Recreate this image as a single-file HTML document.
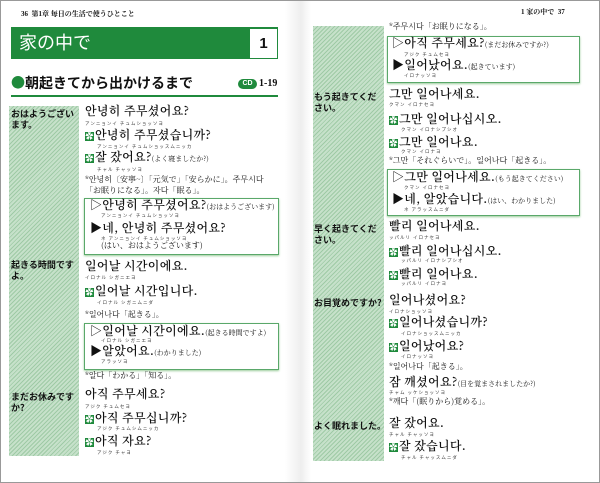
<!DOCTYPE html>
<html><head><meta charset="utf-8"><style>
body{margin:0;width:600px;height:483px;overflow:hidden;background:#fff;font-family:"Liberation Serif","Noto Serif CJK SC",serif;color:#111}
#f{position:absolute;left:0;top:0;width:598px;height:481px;border:1px solid #999;background:#fff}
.a{position:absolute;white-space:nowrap;line-height:1}
.k{font-size:12px;font-family:"Noto Serif CJK SC","Noto Sans CJK KR",serif;font-weight:600;letter-spacing:.3px;margin-top:-2px}
.k small{font-size:7px;font-family:"Noto Serif CJK SC",serif;font-weight:400;letter-spacing:0}
.r{font-size:4.5px;color:#333;letter-spacing:1px;font-family:"Noto Sans CJK JP",sans-serif}
.n{font-size:8px;font-family:"Noto Serif CJK SC",serif;margin-top:-1px}
.l{font-size:9px;font-weight:bold;font-family:"Noto Sans CJK JP",sans-serif;line-height:11px;white-space:normal;width:68px}
.s{position:absolute;background:repeating-linear-gradient(135deg,#9fcaa6 0 1px,#c6e1ca 1px 3px)}
.bx{position:absolute;border:1px solid #5aa86a;box-shadow:0 1px 2px #9c9}
.i{display:inline-block;width:9px;height:9px;background:#1f8a3c;color:#fff;font-size:8px;line-height:9px;text-align:center;vertical-align:0;margin-right:1px;font-weight:400}
</style></head><body><div id="f">
<div class="a" style="left:20px;top:10px;font-size:7px;font-weight:bold">36 &nbsp;第1章 毎日の生活で使うひとこと</div>
<div style="position:absolute;left:10px;top:26px;width:267px;height:32px;background:#1f8a3c"></div>
<div class="a" style="left:18px;top:32px;font-size:18px;color:#fff;font-family:'Noto Sans CJK JP',sans-serif">家の中で</div>
<div style="position:absolute;left:249px;top:28px;width:27px;height:29px;background:#fff;text-align:center;font:bold 15px/29px 'Liberation Sans',sans-serif">1</div>
<div class="a" style="left:10px;top:75px;font-size:14px;font-weight:bold;font-family:'Noto Sans CJK JP',sans-serif"><span style="color:#1f8a3c">●</span>朝起きてから出かけるまで</div>
<div style="position:absolute;left:237px;top:78px;width:19px;height:10px;border-radius:5px;background:#1f8a3c;color:#fff;font:bold 7px/10px sans-serif;text-align:center">CD</div>
<div class="a" style="left:258px;top:78px;font-size:10px;font-weight:bold">1-19</div>
<div style="position:absolute;left:10px;top:94px;width:267px;height:2px;background:#1f8a3c"></div>
<div class="s" style="left:8px;top:105px;width:70px;height:350px"></div>
<div class="a l" style="left:10px;top:107px">おはようございます。</div>
<div class="a k" style="left:84px;top:106px">안녕히 주무셨어요?</div><div class="a r" style="left:84px;top:121px">アンニョンイ チュムショッソヨ</div>
<div class="a k" style="left:84px;top:130px"><span class="i">✿</span>안녕히 주무셨습니까?</div><div class="a r" style="left:96px;top:144px">アンニョンイ チュムショッスムニッカ</div>
<div class="a k" style="left:84px;top:152px"><span class="i">✿</span>잘 잤어요?<small>(よく寝ましたか?)</small></div><div class="a r" style="left:96px;top:167px">チャル チャッソヨ</div>
<div class="a n" style="left:84px;top:176px">*안녕히〔安寧~〕「元気で」「安らかに」。주무시다</div>
<div class="a n" style="left:84px;top:187px">「お眠りになる」。자다「眠る」。</div>
<div class="bx" style="left:83px;top:197px;width:193px;height:55px"></div>
<div class="a k" style="left:89px;top:200px">▷안녕히 주무셨어요?<small>(おはようございます)</small></div><div class="a r" style="left:100px;top:213px">アンニョンイ チュムショッソヨ</div>
<div class="a k" style="left:89px;top:223px">▶네, 안녕히 주무셨어요?</div><div class="a r" style="left:100px;top:236px">ネ アンニョンイ チュムショッソヨ</div>
<div class="a n" style="left:100px;top:242px">(はい、おはようございます)</div>
<div class="a l" style="left:10px;top:258px">起きる時間ですよ。</div>
<div class="a k" style="left:84px;top:261px">일어날 시간이에요.</div><div class="a r" style="left:84px;top:275px">イロナル シガニエヨ</div>
<div class="a k" style="left:84px;top:286px"><span class="i">✿</span>일어날 시간입니다.</div><div class="a r" style="left:96px;top:300px">イロナル シガニムニダ</div>
<div class="a n" style="left:84px;top:311px">*일어나다「起きる」。</div>
<div class="bx" style="left:83px;top:322px;width:193px;height:45px"></div>
<div class="a k" style="left:89px;top:326px">▷일어날 시간이에요.<small>(起きる時間ですよ)</small></div><div class="a r" style="left:100px;top:338px">イロナル シガニエヨ</div>
<div class="a k" style="left:89px;top:346px">▶알았어요.<small>(わかりました)</small></div><div class="a r" style="left:100px;top:359px">アラッソヨ</div>
<div class="a n" style="left:84px;top:372px">*알다「わかる」「知る」。</div>
<div class="a l" style="left:10px;top:390px">まだお休みですか?</div>
<div class="a k" style="left:84px;top:389px">아직 주무세요?</div><div class="a r" style="left:84px;top:404px">アジク チュムセヨ</div>
<div class="a k" style="left:84px;top:413px"><span class="i">✿</span>아직 주무십니까?</div><div class="a r" style="left:96px;top:426px">アジク チュムシムニッカ</div>
<div class="a k" style="left:84px;top:436px"><span class="i">✿</span>아직 자요?</div><div class="a r" style="left:96px;top:450px">アジク チャヨ</div>

<div class="a" style="left:520px;top:8px;font-size:7px;font-weight:bold">1 家の中で &nbsp;37</div>
<div class="s" style="left:312px;top:25px;width:71px;height:435px"></div>
<div class="a n" style="left:388px;top:23px">*주무시다「お眠りになる」。</div>
<div class="bx" style="left:386px;top:35px;width:191px;height:45px"></div>
<div class="a k" style="left:391px;top:38px">▷아직 주무세요?<small>(まだお休みですか?)</small></div><div class="a r" style="left:403px;top:52px">アジク チュムセヨ</div>
<div class="a k" style="left:391px;top:60px">▶일어났어요.<small>(起きています)</small></div><div class="a r" style="left:403px;top:73px">イロナッソヨ</div>
<div class="a l" style="left:313px;top:90px">もう起きてください。</div>
<div class="a k" style="left:388px;top:89px">그만 일어나세요.</div><div class="a r" style="left:388px;top:102px">クマン イロナセヨ</div>
<div class="a k" style="left:388px;top:114px"><span class="i">✿</span>그만 일어나십시오.</div><div class="a r" style="left:400px;top:127px">クマン イロナシプシオ</div>
<div class="a k" style="left:388px;top:137px"><span class="i">✿</span>그만 일어나요.</div><div class="a r" style="left:400px;top:149px">クマン イロナヨ</div>
<div class="a n" style="left:388px;top:157px">*그만「それぐらいで」。일어나다「起きる」。</div>
<div class="bx" style="left:386px;top:168px;width:191px;height:45px"></div>
<div class="a k" style="left:391px;top:172px">▷그만 일어나세요.<small>(もう起きてください)</small></div><div class="a r" style="left:403px;top:185px">クマン イロナセヨ</div>
<div class="a k" style="left:391px;top:194px">▶네, 알았습니다.<small>(はい、わかりました)</small></div><div class="a r" style="left:403px;top:207px">ネ アラッスムニダ</div>
<div class="a l" style="left:313px;top:222px">早く起きてください。</div>
<div class="a k" style="left:388px;top:221px">빨리 일어나세요.</div><div class="a r" style="left:388px;top:235px">ッパルリ イロナセヨ</div>
<div class="a k" style="left:388px;top:246px"><span class="i">✿</span>빨리 일어나십시오.</div><div class="a r" style="left:400px;top:258px">ッパルリ イロナシプシオ</div>
<div class="a k" style="left:388px;top:269px"><span class="i">✿</span>빨리 일어나요.</div><div class="a r" style="left:400px;top:281px">ッパルリ イロナヨ</div>
<div class="a l" style="left:313px;top:296px;width:80px">お目覚めですか?</div>
<div class="a k" style="left:388px;top:295px">일어나셨어요?</div><div class="a r" style="left:388px;top:309px">イロナショッソヨ</div>
<div class="a k" style="left:388px;top:317px"><span class="i">✿</span>일어나셨습니까?</div><div class="a r" style="left:400px;top:331px">イロナショッスムニッカ</div>
<div class="a k" style="left:388px;top:341px"><span class="i">✿</span>일어났어요?</div><div class="a r" style="left:400px;top:354px">イロナッソヨ</div>
<div class="a n" style="left:388px;top:363px">*일어나다「起きる」。</div>
<div class="a k" style="left:388px;top:377px">잠 깨셨어요?<small>(目を覚まされましたか?)</small></div><div class="a r" style="left:388px;top:390px">チャム ッケショッソヨ</div>
<div class="a n" style="left:388px;top:398px">*깨다「(眠りから)覚める」。</div>
<div class="a l" style="left:313px;top:419px;width:80px">よく眠れました。</div>
<div class="a k" style="left:388px;top:418px">잘 잤어요.</div><div class="a r" style="left:388px;top:432px">チャル チャッソヨ</div>
<div class="a k" style="left:388px;top:441px"><span class="i">✿</span>잘 잤습니다.</div><div class="a r" style="left:400px;top:455px">チャル チャッスムニダ</div>
<div style="position:absolute;left:284px;top:0;width:16px;height:481px;background:linear-gradient(90deg,#fff,#eee)"></div>
<div style="position:absolute;left:300px;top:0;width:10px;height:481px;background:linear-gradient(90deg,#eee,#fff)"></div>
</div></body></html>
